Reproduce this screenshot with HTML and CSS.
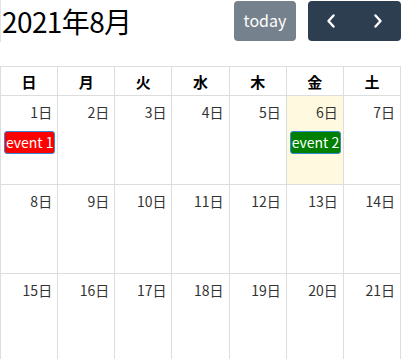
FILE: index.html
```html
<!DOCTYPE html>
<html lang="ja">
<head>
    <meta charset="UTF-8">
    <meta name="viewport" content="width=device-width, initial-scale=1.0">
    <title>カレンダー</title>
    <link rel="stylesheet" href="styles.css">
</head>
<body>

    <div class="toolbar">
        <h2 class="title">2021年8月</h2>
        <div class="buttons">
            <button class="btn btn-today" disabled>today</button>
            <div class="btn-group">
                <button class="btn btn-nav" aria-label="prev">
                    <svg width="10" height="14" viewBox="0 0 10 14"><path d="M7.5 1.5 L2.5 7 L7.5 12.5" fill="none" stroke="#fff" stroke-width="2.4" stroke-linecap="round" stroke-linejoin="round"/></svg>
                </button>
                <button class="btn btn-nav" aria-label="next">
                    <svg width="10" height="14" viewBox="0 0 10 14"><path d="M2.5 1.5 L7.5 7 L2.5 12.5" fill="none" stroke="#fff" stroke-width="2.4" stroke-linecap="round" stroke-linejoin="round"/></svg>
                </button>
            </div>
        </div>
    </div>

    <table class="month">
        <thead>
            <tr>
                <th>日</th><th>月</th><th>火</th><th>水</th><th>木</th><th>金</th><th>土</th>
            </tr>
        </thead>
        <tbody>
            <tr>
                <td><div class="day-num">1日</div><div class="event event-red">event 1</div></td>
                <td><div class="day-num">2日</div></td>
                <td><div class="day-num">3日</div></td>
                <td><div class="day-num">4日</div></td>
                <td><div class="day-num">5日</div></td>
                <td class="today"><div class="day-num">6日</div><div class="event event-green">event 2</div></td>
                <td><div class="day-num">7日</div></td>
            </tr>
            <tr>
                <td><div class="day-num">8日</div></td>
                <td><div class="day-num">9日</div></td>
                <td><div class="day-num">10日</div></td>
                <td><div class="day-num">11日</div></td>
                <td><div class="day-num">12日</div></td>
                <td><div class="day-num">13日</div></td>
                <td><div class="day-num">14日</div></td>
            </tr>
            <tr>
                <td><div class="day-num">15日</div></td>
                <td><div class="day-num">16日</div></td>
                <td><div class="day-num">17日</div></td>
                <td><div class="day-num">18日</div></td>
                <td><div class="day-num">19日</div></td>
                <td><div class="day-num">20日</div></td>
                <td><div class="day-num">21日</div></td>
            </tr>
        </tbody>
    </table>

</body>
</html>
```

FILE: styles.css
```css
html, body {
    overflow: hidden;
}
body {
    margin: 0;
    width: 401px;
    font-family: "Noto Sans CJK JP", "Noto Sans", sans-serif;
    color: #000;
    background: #fff;
}
.toolbar {
    display: flex;
    justify-content: space-between;
    align-items: center;
    height: 42px;
    margin-bottom: 24px;
    border-left: 1px solid #e3e3e3;
}
.title {
    margin: 0 0 0 1px;
    font-size: 28px;
    font-weight: normal;
    line-height: 1;
    letter-spacing: -0.6px;
}
.buttons {
    display: flex;
    gap: 12px;
    align-items: center;
}
.btn {
    border: none;
    color: #fff;
    font-family: inherit;
    font-size: 16px;
    height: 40px;
    padding: 0;
    display: flex;
    align-items: center;
    justify-content: center;
}
.btn-today {
    width: 62px;
    border-radius: 4px;
    background-color: #2c3e50;
    opacity: 0.65;
    padding-bottom: 2px;
}
.btn-group {
    display: flex;
    background-color: #2c3e50;
    border-radius: 4px;
}
.btn-nav {
    width: 46.5px;
    background: transparent;
}
.month {
    width: 401px;
    border-collapse: collapse;
    table-layout: fixed;
    border-left: 1px solid #000;
}
th, td {
    border: 1px solid #ddd;
    padding: 0;
}
th {
    height: 28px;
    font-size: 15px;
    font-weight: bold;
    text-align: center;
}
td {
    height: 88px;
    vertical-align: top;
}
td.today {
    background-color: #fffadf;
}
.day-num {
    text-align: right;
    font-size: 14px;
    line-height: 21px;
    padding: 6px 5px 0 0;
    color: #333;
}
.event {
    margin: 8px 2px 0 3px;
    border: 1px solid #3788d8;
    border-radius: 3px;
    color: #fff;
    font-size: 14px;
    line-height: 21px;
    padding-left: 1px;
    white-space: nowrap;
    overflow: hidden;
}
.event-red {
    background-color: #f00;
}
.event-green {
    background-color: #008000;
}
```
